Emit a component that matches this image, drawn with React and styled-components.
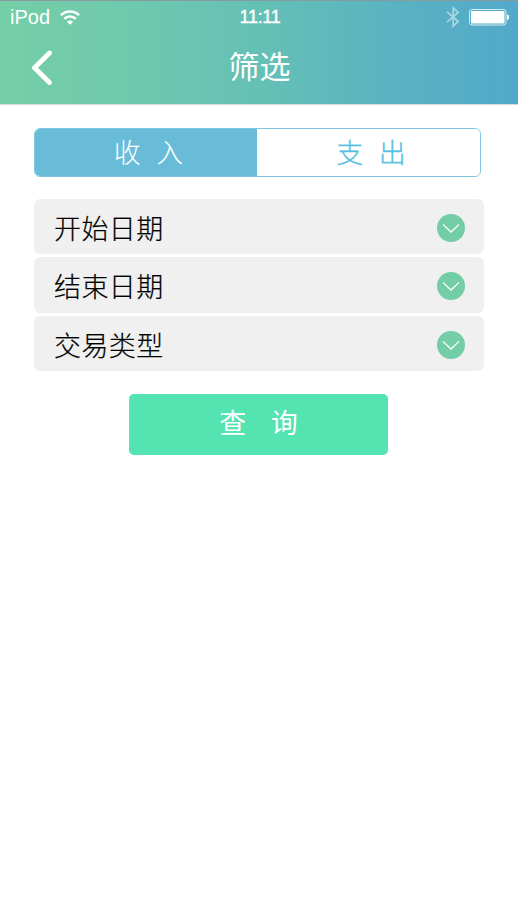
import React from "react";
import styled, { createGlobalStyle } from "styled-components";

const GlobalStyle = createGlobalStyle`
  * {
    box-sizing: border-box;
  }

  body {
    margin: 0;
    background-color: #FFF;
    font-family: "Liberation Sans", "Noto Sans CJK SC", sans-serif;
  }

  button {
    font-family: inherit;
    padding: 0;
    border: none;
    background: none;
  }
`;

const Page = styled.div`
  width: 100%;
  min-height: 920px;
  background-color: #FFF;
`;

const Header = styled.header`
  height: 105px;
  border-top: 1px solid #849C9D;
  border-bottom: 1px solid #DADADA;
  background: linear-gradient(90deg, #74CEA7 0%, #70CAAC 22%, #65C0B5 50%, #5AB1C2 78%, #52A9CB 100%);
  color: #FFF;
`;

const StatusBar = styled.div`
  height: 32px;
  padding: 0 8px 0 10px;
  display: grid;
  grid-template-columns: 1fr auto 1fr;
  align-items: center;
`;

const Carrier = styled.div`
  display: flex;
  align-items: center;
  gap: 10px;
  font-size: 20px;
  letter-spacing: 0;
  line-height: 32px;
`;

const Clock = styled.div`
  font-size: 18px;
  letter-spacing: -0.3px;
  line-height: 32px;
  -webkit-text-stroke: 0.4px #FFF;
`;

const Indicators = styled.div`
  display: flex;
  justify-content: flex-end;
  align-items: center;
  gap: 9px;
`;

const NavBar = styled.div`
  height: 70px;
  padding: 0 30px;
  display: grid;
  grid-template-columns: 30px 1fr 30px;
  align-items: center;
`;

const BackButton = styled.button`
  height: 40px;
  display: flex;
  align-items: center;
`;

const Title = styled.h1`
  margin: 0;
  padding-left: 1px;
  text-align: center;
  font-size: 31px;
  font-weight: 400;
  line-height: 70px;
`;

const Content = styled.main`
  padding: 23px 34px 0;
`;

const Tabs = styled.div`
  width: 447px;
  height: 49px;
  display: flex;
  border: 1px solid #7CC8E2;
  border-radius: 6px;
  background-color: #FFF;
  overflow: hidden;
`;

const Tab = styled.button`
  width: ${props => props.$active ? "222px" : "223px"};
  padding: 0 0 2px 5px;
  font-size: 27px;
  font-weight: 300;
  font-family: "Noto Sans CJK SC", sans-serif;
  line-height: 45px;
  word-spacing: 9.5px;
  color: ${props => props.$active ? "#FFF" : "#55C0DF"};
  -webkit-text-stroke: ${props => props.$active ? "0" : "0.3px"};
  background-color: ${props => props.$active ? "#69BCD8" : "#FFF"};
`;

const Filters = styled.div`
  width: 450px;
  margin-top: 22px;
  display: flex;
  flex-direction: column;
  gap: 3px;
`;

const Row = styled.div`
  height: 55.3px;
  padding: 0 19px 0 20px;
  display: flex;
  align-items: center;
  justify-content: space-between;
  border-radius: 6px;
  background-color: #F0F0F0;
`;

const Label = styled.span`
  padding-top: 2px;
  font-size: 27px;
  font-weight: 300;
  font-family: "Noto Sans CJK SC", sans-serif;
  letter-spacing: 0.4px;
  line-height: 53px;
  color: #000;
  -webkit-text-stroke: 0.2px #000;
`;

const Round = styled.span`
  width: 28px;
  height: 28px;
  margin-top: 3px;
  display: flex;
  align-items: center;
  justify-content: center;
  border-radius: 50%;
  background-color: #73CDA7;
`;

const Submit = styled.button`
  display: block;
  width: 259px;
  height: 61px;
  margin: 23px 0 0 95px;
  border-radius: 5px;
  font-size: 27px;
  line-height: 59px;
  word-spacing: 17px;
  color: #FFF;
  background-color: #54E4B1;
`;

const WifiIcon = () => (
  <svg width="20" height="15" viewBox="0 0 20 15" fill="none" stroke="#FFF" strokeWidth="2.5">
    <path d="M0.9 5.2C6 0.1 14 0.1 19.1 5.2" />
    <path d="M4.2 8.8C7.4 5.6 12.6 5.6 15.8 8.8" />
    <path d="M10 14.8L6.9 11.7C8.6 10 11.4 10 13.1 11.7Z" fill="#FFF" stroke="none" />
  </svg>
);

const BluetoothIcon = () => (
  <svg width="14" height="22" viewBox="0 0 14 22" fill="none" stroke="#FFF" strokeOpacity="0.5" strokeWidth="1.7">
    <path d="M1 5.8L12.2 15.6L7.2 20V2L12.2 6.4L1 16.2" />
  </svg>
);

const BatteryIcon = () => (
  <svg width="41" height="17" viewBox="0 0 41 17">
    <rect x="0.5" y="0.5" width="36.5" height="15.5" rx="2.5" fill="none" stroke="#D5EEF5" />
    <rect x="2" y="2" width="33.5" height="12.5" rx="1" fill="#FFF" />
    <path d="M38 5.5C40.7 5.5 40.7 11 38 11Z" fill="#FFF" />
  </svg>
);

const BackIcon = () => (
  <svg width="24" height="36" viewBox="0 0 24 36" fill="none" stroke="#FFF" strokeWidth="4.8" strokeLinecap="round" strokeLinejoin="round">
    <path d="M19.5 3L4.5 17.7L19.5 32.5" />
  </svg>
);

const ArrowIcon = () => (
  <svg width="18" height="10" viewBox="0 0 18 10" fill="none" stroke="#FFF" strokeWidth="1.3">
    <path d="M1 1.4L9 9L17 1.4" />
  </svg>
);

const filters = ["开始日期", "结束日期", "交易类型"];

class App extends React.Component {
  state = { tab: "收 入" };

  render() {
    return (
      <Page>
        <GlobalStyle />
        <Header>
          <StatusBar>
            <Carrier>iPod <WifiIcon /></Carrier>
            <Clock>11:11</Clock>
            <Indicators>
              <BluetoothIcon />
              <BatteryIcon />
            </Indicators>
          </StatusBar>
          <NavBar>
            <BackButton aria-label="返回"><BackIcon /></BackButton>
            <Title>筛选</Title>
          </NavBar>
        </Header>
        <Content>
          <Tabs>
            {["收 入", "支 出"].map(tab => (
              <Tab key={tab} $active={this.state.tab === tab} onClick={() => this.setState({ tab })}>
                {tab}
              </Tab>
            ))}
          </Tabs>
          <Filters>
            {filters.map(name => (
              <Row key={name}>
                <Label>{name}</Label>
                <Round><ArrowIcon /></Round>
              </Row>
            ))}
          </Filters>
          <Submit>查 询</Submit>
        </Content>
      </Page>
    )
  }
}

export default App;
